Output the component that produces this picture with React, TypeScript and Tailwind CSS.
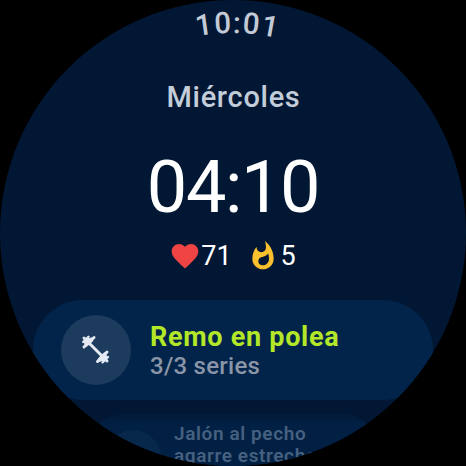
import React from 'react';
import { MdFavorite, MdWhatshot } from 'react-icons/md';

function CurvedClock({ time }: { time: string }) {
    return (
        <svg width="466" height="60" viewBox="0 0 466 60" className="block shrink-0">
            <path id="clock-arc" d="M33 233 A200 200 0 0 1 433 233" fill="none" />
            <text fill="#c3cad6" fontSize="29.5" fontWeight="500" letterSpacing="1.4" textAnchor="middle">
                <textPath href="#clock-arc" startOffset="50.7%">{time}</textPath>
            </text>
        </svg>
    );
}

function Dumbbell() {
    return (
        <svg width="30" height="30" viewBox="0 0 30 30" fill="none" stroke="#e4e9f4" strokeLinecap="round">
            <path d="M3 3L26 26" strokeWidth="3" />
            <path d="M3 12L13 2.500M26 17L16.500 26.500" strokeWidth="3" />
            <path d="M2.200 7L7.500 1.800M27 22L21.500 27.300" strokeWidth="2.4" />
            <path d="M5.500 9L10 5M23.500 20L19 24.500M5 7L7 5M24 22L22 24" strokeWidth="4.5" />
        </svg>
    );
}

export default function App() {
    return (
        <div className="w-[466px] h-[466px] bg-black overflow-hidden font-[Roboto,sans-serif]">
            <div className="w-full h-full rounded-full overflow-hidden bg-[#021733] flex flex-col items-center">
                <CurvedClock time="10:01" />

                <h1 className="mt-[19px] h-9 pl-px text-[29px] leading-9 font-medium tracking-[0.7px] text-[#c3cdda]">Miércoles</h1>

                <div className="mt-[35px] h-[76px] text-[72px] leading-[76px] tracking-[-1.4px] text-white">04:10</div>

                {/* Heart rate and calories */}
                <div className="mt-[14px] h-8 flex items-center pr-px text-[27px] leading-8 text-white">
                    <MdFavorite size={32} className="text-[#f04343]" />
                    <span>71</span>
                    <MdWhatshot size={32} className="ml-[15px] text-[#fbc02d]" />
                    <span className="ml-0.5">5</span>
                </div>

                {/* Current exercise */}
                <div className="mt-7 w-[400px] h-[100px] shrink-0 rounded-full bg-[#02244a] flex items-center pl-7">
                    <div className="w-[70px] h-[70px] rounded-full bg-[#1c3b5d] flex items-center justify-center">
                        <Dumbbell />
                    </div>
                    <div className="ml-[19px] mt-[3px] flex flex-col">
                        <span className="text-[27px] leading-[30px] font-bold tracking-[0.7px] text-[#b4e728]">Remo en polea</span>
                        <span className="text-[24px] leading-[29px] font-medium tracking-[0.25px] text-[#8a96a7]">3/3 series</span>
                    </div>
                </div>

                {/* Next exercise, scaled down at the edge of the list */}
                <div className="mt-[13px] w-[300px] h-[90px] shrink-0 rounded-[45px] bg-linear-to-b from-[#021a39] to-[#012044] to-15% flex items-start pt-[10px] pl-[22px]">
                    <div className="mt-[7px] w-[56px] h-[56px] rounded-full bg-[#07284b]" />
                    <div className="ml-[13px] text-[19px] leading-[22px] font-semibold tracking-[0.6px] text-[#466180] whitespace-nowrap">
                        Jalón al pecho<br />agarre estrecho
                    </div>
                </div>
            </div>
        </div>
    );
}
